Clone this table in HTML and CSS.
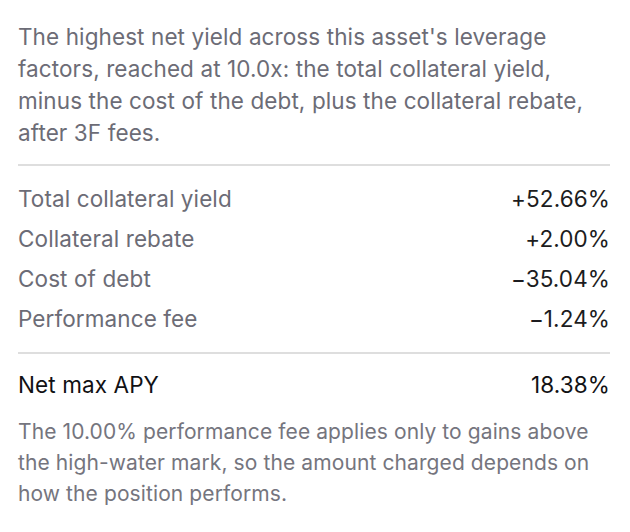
FILE: index.html
```html
<!DOCTYPE html>
<html>
<head>
<meta charset="utf-8">
<link rel="stylesheet" href="styles.css">
</head>
<body>
<div class="panel">
  <p class="intro">The highest net yield across this asset's leverage factors, reached at 10.0x: the total collateral yield, minus the cost of the debt, plus the collateral rebate, after 3F fees.</p>
  <div class="rows">
    <div class="row"><span class="label">Total collateral yield</span><span class="value">+52.66%</span></div>
    <div class="row"><span class="label">Collateral rebate</span><span class="value">+2.00%</span></div>
    <div class="row"><span class="label">Cost of debt</span><span class="value">−35.04%</span></div>
    <div class="row"><span class="label">Performance fee</span><span class="value">−1.24%</span></div>
  </div>
  <div class="total"><span>Net max APY</span><span>18.38%</span></div>
  <p class="note">The 10.00% performance fee applies only to gains above the high-water mark, so the amount charged depends on how the position performs.</p>
</div>
</body>
</html>
```
FILE: styles.css
```css
html, body {
  margin: 0;
  padding: 0;
  background: #ffffff;
}
body {
  font-family: Inter, "Noto Sans", sans-serif;
}
.panel {
  width: 592px;
  padding: 21px 20px 0 18px;
  display: flex;
  flex-direction: column;
}
.intro {
  margin: 0;
  font-size: 22.5px;
  letter-spacing: 0.1px;
  line-height: 32px;
  color: #6c6c76;
  padding-bottom: 15px;
  border-bottom: 2px solid #dedede;
}
.rows {
  display: flex;
  flex-direction: column;
  padding: 13px 0 13px;
  border-bottom: 2px solid #dedede;
}
.row {
  display: flex;
  justify-content: space-between;
  font-size: 22.5px;
  letter-spacing: 0.1px;
  line-height: 40px;
}
.label {
  color: #6c6c76;
}
.value {
  color: #1c1c20;
}
.total {
  display: flex;
  justify-content: space-between;
  font-size: 22.5px;
  letter-spacing: 0.1px;
  line-height: 32px;
  color: #111114;
  padding-top: 15px;
}
.note {
  margin: 15px 0 0;
  font-size: 21px;
  letter-spacing: 0.1px;
  line-height: 31px;
  color: #75757e;
}
```
